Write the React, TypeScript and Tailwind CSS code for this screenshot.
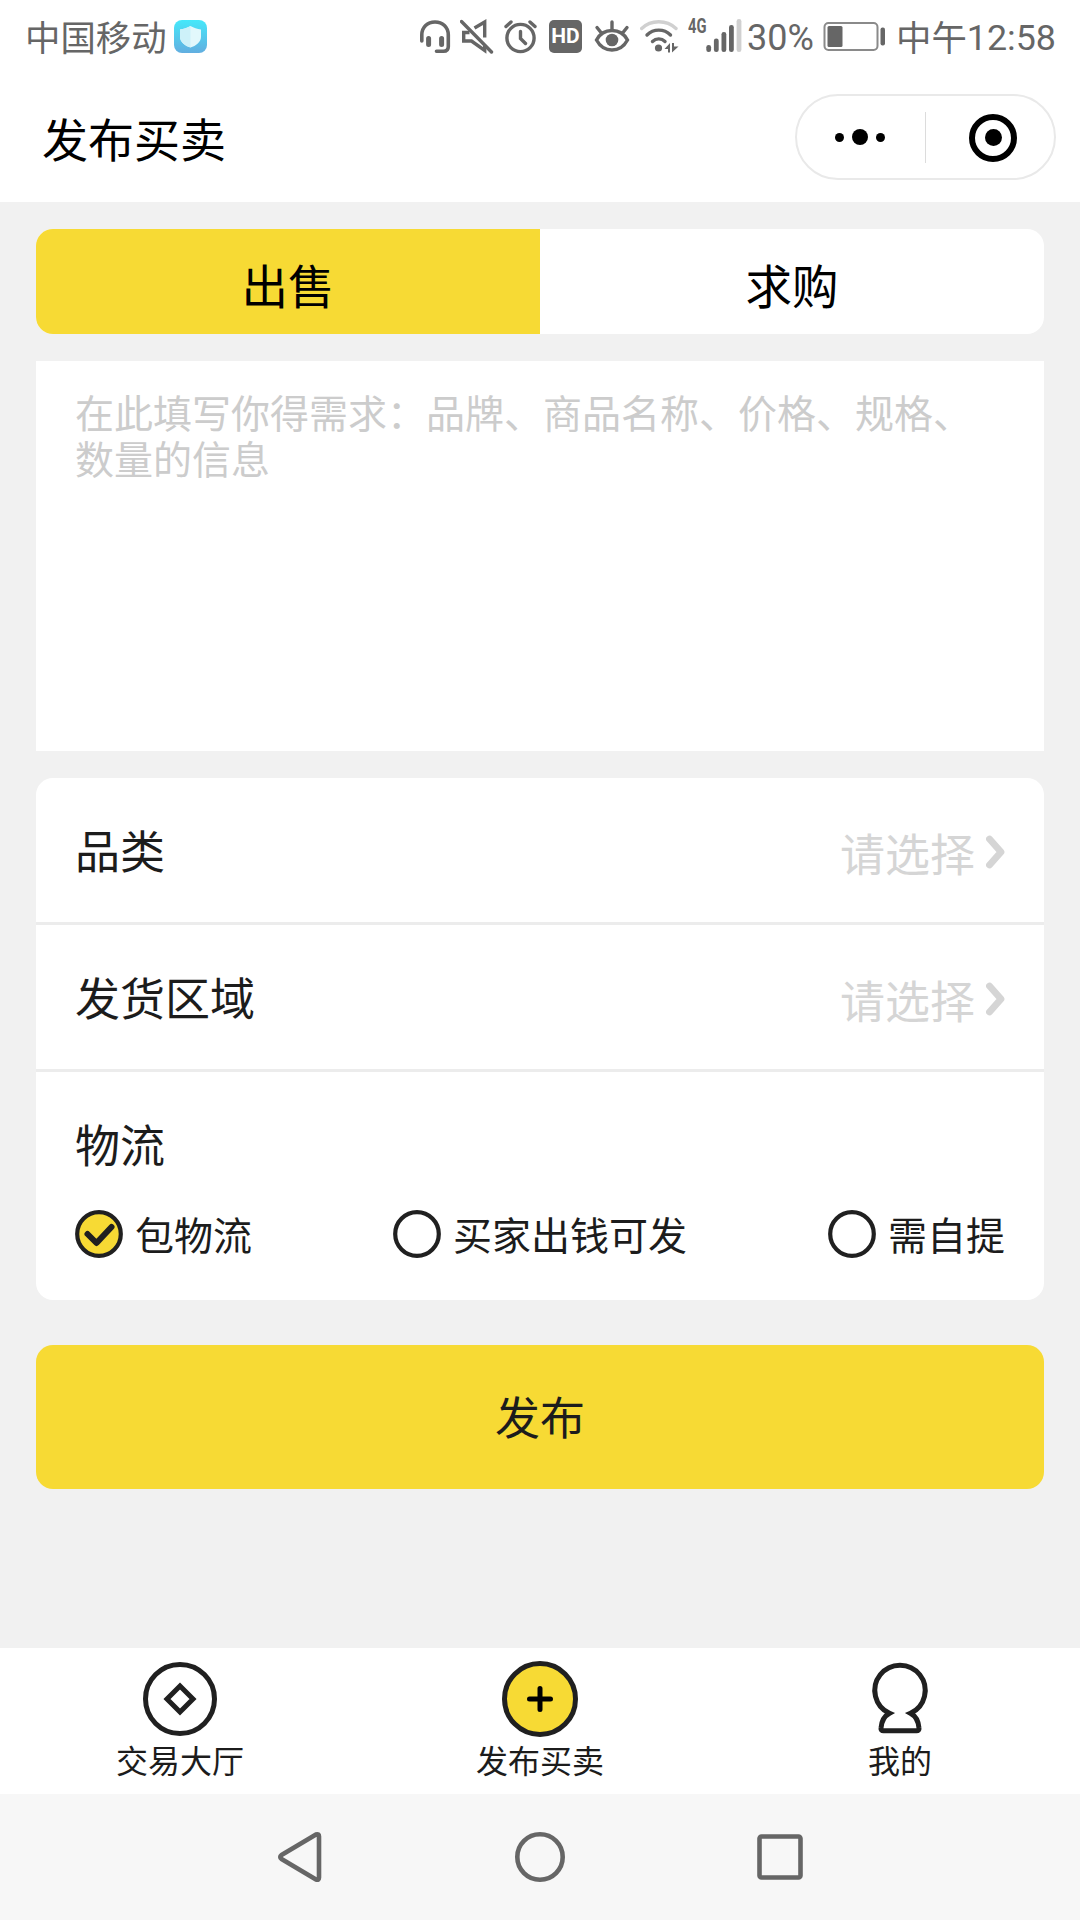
import { useState } from "react";
import type { ReactNode } from "react";

const shipping = ["包物流", "买家出钱可发", "需自提"];

const fields = ["品类", "发货区域"];

const StatusBar = () => (
  <div className="flex h-[75px] items-start pt-[18px] text-[#666666]">
    <span className="ml-[25px] w-[149px] text-[35.4px] leading-[35px] whitespace-nowrap">中国移动</span>
    <svg className="mt-[1px]" width="34" height="34" viewBox="0 0 34 34">
      <defs>
        <linearGradient id="shield" x1="0" y1="0" x2="0" y2="1">
          <stop offset="0" stopColor="#45e8fa" />
          <stop offset="1" stopColor="#62aee0" />
        </linearGradient>
      </defs>
      <rect y="1" width="33" height="33" rx="8" fill="url(#shield)" />
      <path d="M16.500 7 C20 9 23 10 27 10.500 V18 C27 23 22 27 16.500 28.500 C11 27 6 23 6 18 V10.500 C10 10 13 9 16.500 7 Z" fill="#e2f8fc" />
      <path d="M16.500 7 V28.500 C11 27 6 23 6 18 V10.500 C10 10 13 9 16.500 7 Z" fill="#cdf1f9" />
    </svg>

    {/* headset */}
    <svg className="ml-[212px] mt-[1px]" width="31" height="35" viewBox="0 0 31 35" fill="none" stroke="currentColor" strokeWidth="3.600" strokeLinecap="round">
      <path d="M1.800 22 V16 C1.800 8 7.500 3 15 3 C22.500 3 28.300 8 28.300 16 V27.500 Q28.300 32.300 23.500 32.300 H16.500" />
      <path d="M8.600 19.500 V25.500 M21.600 19.500 V25.500" strokeWidth="5" />
    </svg>
    {/* muted speaker */}
    <svg className="ml-[9px] mt-[1px]" width="34" height="35" viewBox="0 0 34 35" fill="none" stroke="currentColor" strokeWidth="3.400">
      <path d="M1.500 2.500 L31.500 33" strokeLinecap="round" />
      <path d="M14.500 9 L24.700 3 V18.500" />
      <path d="M9.500 13.500 H3.700 V22 H11.500 L24.700 31.500 V27" />
    </svg>
    {/* alarm */}
    <svg className="ml-[10px] mt-[1px]" width="34" height="35" viewBox="0 0 34 35" fill="none" stroke="currentColor" strokeWidth="3.400" strokeLinecap="round">
      <circle cx="16.500" cy="19" r="13.600" />
      <path d="M16.500 12.500 V19.500 L21.500 24.500 M2 7.500 L7 3 M26 3 L31 7.500" />
    </svg>
    <span className="ml-[11px] mt-[2px] flex h-[33px] w-[33px] items-center justify-center rounded-[5px] bg-[#666666] font-[Roboto] text-[21px] leading-none font-bold text-white">
      HD
    </span>
    {/* eye */}
    <svg className="ml-[12px] mt-[1px]" width="37" height="35" viewBox="0 0 37 35" fill="none" stroke="currentColor" strokeWidth="3.400" strokeLinecap="round">
      <path d="M2.500 21 C6 14.500 11.500 11.500 18 11.500 C24.500 11.500 30 14.500 33.500 21 C30 27.500 24.500 31 18 31 C11.500 31 6 27.500 2.500 21 Z" />
      <path d="M18 3 V10 M3 8.500 L7 13.500 M33 8.500 L29 13.500" />
      <circle cx="18" cy="21" r="6.300" fill="currentColor" stroke="none" />
    </svg>
    {/* wifi */}
    <svg className="ml-[9px]" width="40" height="36" viewBox="0 0 40 36" fill="none" strokeWidth="3.400" strokeLinecap="round">
      <path d="M1.700 10.500 C11 1.500 26.500 1.500 36 10.500" stroke="#d0d0d0" />
      <path d="M7 17 C13.500 10.500 24 10.500 30.500 17 M12.500 23.500 C16 20 21.500 20 25 23.500" stroke="currentColor" />
      <circle cx="18.500" cy="30" r="3.600" fill="currentColor" />
      <path d="M24.500 31 L30 25 V34.500 H28 V31 Z M32 25 V34.500 L38.500 28.500 H34 V25 Z" fill="currentColor" />
    </svg>
    {/* signal */}
    <div className="ml-[8px] flex h-[36px] w-[54px] items-start">
      <span className="w-[18px] origin-left scale-x-[0.7] font-[Roboto] text-[21px] leading-[17px] font-bold">4G</span>
      <svg width="36" height="36" viewBox="0 0 36 36" fill="currentColor">
        <rect x="0.300" y="27" width="4.800" height="7" rx="2.300" />
        <rect x="7.900" y="20.500" width="4.800" height="13.500" rx="2.300" />
        <rect x="15.500" y="14" width="4.800" height="20" rx="2.300" />
        <rect x="23" y="7" width="4.800" height="27" rx="2.300" />
        <rect x="30.600" y="1" width="4.800" height="33" rx="2.300" fill="#d0d0d0" />
      </svg>
    </div>
    <span className="ml-[5px] w-[76px] font-[Roboto] text-[36px] leading-[41px]">30%</span>
    {/* battery */}
    <svg className="mt-[3px]" width="63" height="31" viewBox="0 0 63 31">
      <rect x="1.500" y="2" width="53" height="27" rx="4" fill="none" stroke="#8a8a8a" strokeWidth="2" />
      <rect x="4.500" y="5" width="15" height="21" rx="1.500" fill="currentColor" />
      <rect x="57.500" y="6.500" width="4.500" height="18" rx="2" fill="currentColor" />
    </svg>
    <span className="ml-[10px] flex whitespace-nowrap">
      <span className="text-[35.4px] leading-[35px]">中午</span>
      <span className="font-[Roboto] text-[35.800px] leading-[41px]">12:58</span>
    </span>
  </div>
);

const TitleBar = () => (
  <div className="flex h-[127px] items-start justify-between pr-[24px] pl-[42px]">
    <h1 className="mt-[32px] text-[46px] leading-[60px] text-black">发布买卖</h1>
    <div className="mt-[19px] flex h-[86px] w-[261px] items-center rounded-full border-2 border-[#e9e9e9]">
      <div className="flex w-[128px] items-center justify-center gap-2 pr-[2px]">
        <i className="size-[9px] rounded-full bg-black" />
        <i className="size-[16px] rounded-full bg-black" />
        <i className="size-[9px] rounded-full bg-black" />
      </div>
      <div className="h-[51px] w-px bg-[#dcdcdc]" />
      <div className="flex flex-1 items-center justify-center pt-px pl-[6px]">
        <div className="flex size-[48px] items-center justify-center rounded-full border-[6px] border-black">
          <i className="size-[17px] rounded-full bg-black" />
        </div>
      </div>
    </div>
  </div>
);

const Radio = ({ checked }: { checked: boolean }) => (
  <svg width="48" height="48" viewBox="0 0 48 48" fill="none" stroke="#202020">
    <circle cx="24" cy="24" r="21.800" strokeWidth="4.200" fill={checked ? "#f7da34" : "#ffffff"} />
    {checked && <path d="M12.500 24 L21.500 33 L36.500 17" strokeWidth="6" strokeLinecap="round" strokeLinejoin="round" />}
  </svg>
);

const TabItem = ({ label, children }: { label: string; children: ReactNode }) => (
  <div className="flex flex-1 flex-col items-center pt-[13px]">
    <svg width="76" height="76" viewBox="0 0 76 76" fill="none" stroke="#202020" strokeWidth="5">
      {children}
    </svg>
    <span className="mt-[2px] text-[32px] leading-[40px] text-[#1c1c1c]">{label}</span>
  </div>
);

export default function App() {
  const [mode, setMode] = useState("出售");
  const [ship, setShip] = useState(shipping[0]);

  return (
    <div className="flex h-[1920px] w-[1080px] flex-col overflow-hidden bg-[#f1f1f1] font-['Noto_Sans_CJK_SC',sans-serif] font-normal">
      <header className="bg-white">
        <StatusBar />
        <TitleBar />
      </header>

      <main className="flex flex-1 flex-col px-[36px] pt-[27px]">
        {/* Sell / buy switch */}
        <div className="flex h-[105px] overflow-hidden rounded-[17px] bg-white">
          {["出售", "求购"].map((item) => (
            <button
              key={item}
              onClick={() => setMode(item)}
              className={`flex-1 pt-[5px] text-[46.5px] leading-[60px] text-black ${mode === item ? "bg-[#f7da34]" : ""}`}
            >
              {item}
            </button>
          ))}
        </div>

        <div className="mt-[27px] h-[390px] bg-white px-[39px] pt-[27px] text-[39px] leading-[46px] text-[#cccccc]">
          在此填写你得需求：品牌、商品名称、价格、规格、数量的信息
        </div>

        <div className="mt-[27px] h-[522px] rounded-[17px] bg-white text-[45px] text-[#1c1c1c]">
          {fields.map((item) => (
            <div key={item} className="flex h-[147px] items-center justify-between border-b-[3px] border-[#ececec] pr-[38px] pl-[39px]">
              <span>{item}</span>
              <span className="flex items-center text-[#d5d5d5]">
                <span className="pt-[5px]">请选择</span>
                <svg className="mt-[3px] ml-[11px]" width="20" height="34" viewBox="0 0 20 34" fill="none" stroke="currentColor" strokeWidth="6.800" strokeLinecap="round" strokeLinejoin="round">
                  <path d="M3.500 4 L15 17 L3.500 30" />
                </svg>
              </span>
            </div>
          ))}
          <div className="px-[39px] pt-[42px]">
            <div className="leading-[60px]">物流</div>
            <div className="mt-[36px] flex justify-between text-[39px] leading-[48px]">
              {shipping.map((item) => (
                <button key={item} onClick={() => setShip(item)} className="flex items-center gap-[12px]">
                  <Radio checked={ship === item} />
                  <span className="-mt-[2px]">{item}</span>
                </button>
              ))}
            </div>
          </div>
        </div>

        <button className="mt-[45px] h-[144px] rounded-[17px] bg-[#f7da34] pb-[2px] text-[45px] text-[#1c1c1c]">发布</button>
      </main>

      <nav className="flex h-[146px] bg-white">
        <TabItem label="交易大厅">
          <circle cx="38" cy="38" r="34.500" />
          <path d="M38 25 L51 38 L38 51 L25 38 Z" />
        </TabItem>
        <TabItem label="发布买卖">
          <circle cx="38" cy="38" r="35.500" fill="#f7da34" />
          <path d="M38 27.500 V48.500 M27.500 38 H48.500" stroke="#000000" strokeLinecap="round" />
        </TabItem>
        <TabItem label="我的">
          <path d="M27.500 52.300 A25.200 25.200 0 1 1 48.500 52.300 C53.500 55 56.500 61 57 67 Q57.300 69.800 54.500 69.800 H21.500 Q18.700 69.800 19 67 C19.500 61 22.500 55 27.500 52.300 Z" />
          {/* notches at the neck */}
          <path d="M24 50 L32 52.300 L24 56 Z M52 50 L44 52.300 L52 56 Z" fill="#202020" stroke="none" />
        </TabItem>
      </nav>

      {/* Android keys */}
      <div className="flex h-[126px] items-center justify-center bg-[#f7f7f7]">
        <svg width="530" height="54" viewBox="0 0 530 54" fill="none" stroke="#666666" strokeWidth="4.600" strokeLinejoin="round">
          <path d="M6.500 25 L41 4.500 Q44 3.500 44 6.500 V47.500 Q44 50.500 41 49.500 L6.500 29 Q4 27 6.500 25 Z" />
          <circle cx="265" cy="27" r="22.700" />
          <rect x="484.500" y="6.500" width="41" height="41" rx="2" />
        </svg>
      </div>
    </div>
  );
}
